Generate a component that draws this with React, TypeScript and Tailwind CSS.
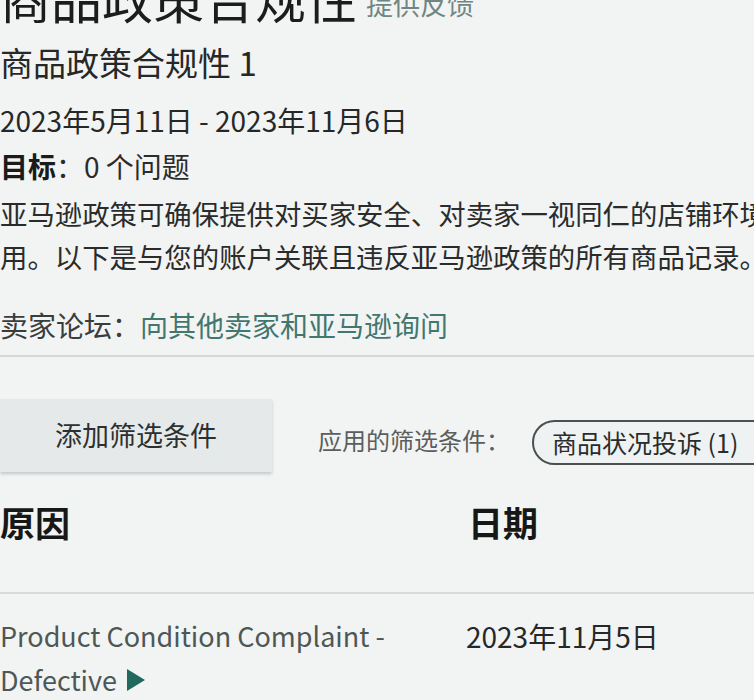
import React from "react";

const font = { fontFamily: '"Noto Sans CJK SC", "Noto Sans", sans-serif' };

export default function App() {
  return (
    <div
      className="w-[754px] h-[700px] overflow-hidden bg-[#f2f3f3] text-[#1f2121]"
      style={font}
    >
      <div className="w-[820px]">
        <div className="flex items-end gap-[9px] h-[60px] -mt-[33px]">
          <span className="text-[51px] leading-[60px] text-[#1b1d1d]">商品政策合规性</span>
          <span className="text-[27px] leading-[40px] text-[#6e8784] mb-[3px]">提供反馈</span>
        </div>
        <div className="h-[40px] mt-[16px] flex items-center text-[33px] text-[#262828]">
          商品政策合规性 1
        </div>
        <div className="h-[40px] mt-[17px] flex items-center text-[28px] text-[#262828]">
          2023年5月11日 - 2023年11月6日
        </div>
        <div className="h-[40px] mt-[6px] flex items-center text-[28px] text-[#2a2c2c]">
          <span className="font-bold text-[#1a1c1c]">目标</span>
          <span>：0 个问题</span>
        </div>
        <div className="mt-[6px] text-[27.4px] leading-[43px] text-[#2a2c2c]">
          <div className="whitespace-nowrap">亚马逊政策可确保提供对买家安全、对卖家一视同仁的店铺环境至</div>
          <div className="whitespace-nowrap">用。以下是与您的账户关联且违反亚马逊政策的所有商品记录。</div>
        </div>
        <div className="h-[40px] mt-[27px] flex items-center text-[28px]">
          <span className="text-[#3a3d3d]">卖家论坛：</span>
          <span className="text-[#41776f]">向其他卖家和亚马逊询问</span>
        </div>
        <div className="mt-[10px] h-[2px] bg-[#d6d8d8]" />
        <div className="mt-[42px] flex items-center">
          <div className="w-[272px] h-[73px] bg-[#e5e9e9] shadow-[0_2px_3px_rgba(0,0,0,0.18)] flex items-center justify-center text-[27px] text-[#2d3030]">
            添加筛选条件
          </div>
          <span className="ml-[46px] text-[24px] text-[#5a5e5e] mt-[8px]">应用的筛选条件：</span>
          <div className="ml-[22px] mt-[14px] h-[45px] pl-[18px] pr-[40px] rounded-full border-2 border-[#4b4f4f] bg-[#eef2f3] flex items-center text-[25px] text-[#2a2c2c] whitespace-nowrap">
            商品状况投诉 (1)
          </div>
        </div>
        <div className="mt-[30px] h-[40px] flex items-center text-[35px] font-bold text-[#161818]">
          <span className="w-[468px]">原因</span>
          <span>日期</span>
        </div>
        <div className="mt-[50px] h-[2px] bg-[#d8dada]" />
        <div className="mt-[20px] flex text-[27px] leading-[44px]">
          <div className="w-[466px] text-[#4d5856]">
            <div>Product Condition Complaint -</div>
            <div className="flex items-center gap-[10px]">
              <span>Defective</span>
              <svg width="18" height="22" viewBox="0 0 18 22">
                <polygon points="0,0 18,11 0,22" fill="#1f6a5c" />
              </svg>
            </div>
          </div>
          <div className="text-[28px] text-[#262828]">2023年11月5日</div>
        </div>
      </div>
    </div>
  );
}
